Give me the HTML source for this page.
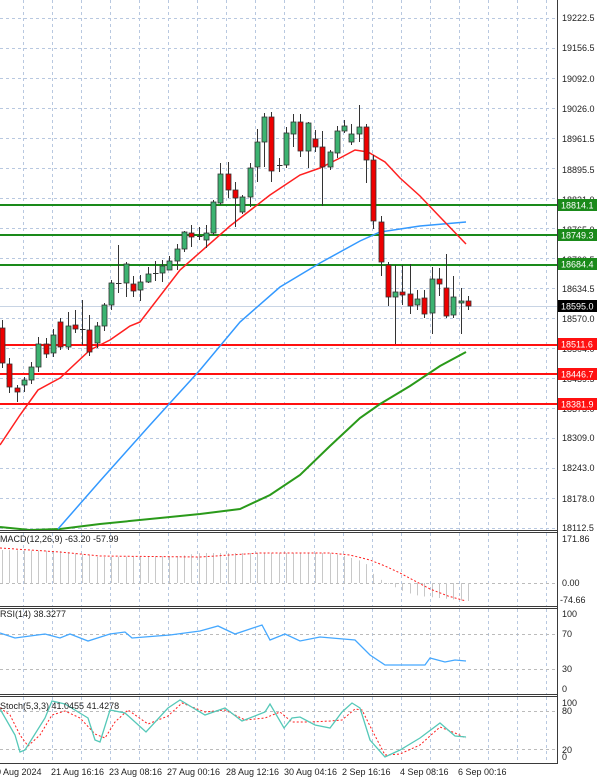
<!DOCTYPE html>
<html><head><meta charset="utf-8"><style>
html,body{margin:0;padding:0;background:#fff;width:600px;height:782px;overflow:hidden}
svg{display:block;font-family:"Liberation Sans",sans-serif}
</style></head><body>
<svg id="s" width="600" height="782" viewBox="0 0 600 782" xmlns="http://www.w3.org/2000/svg">
<g id="grid" stroke="#b8c8e0" stroke-width="1" stroke-dasharray="3,3"></g>
<g id="levels"></g>
<g id="mas" fill="none" stroke-width="1.5">
<polyline stroke="#2a9a1a" stroke-width="2" points="0,527 30,530 60,529 100,524 160,518 200,514 240,509 270,495 300,475 330,446 360,418 380,404 410,386 440,366 466,352"/>
<polyline stroke="#3399ff" points="58,529 100,481 150,425 200,370 240,322 280,287 320,263 360,241 380,232 420,226 466,222"/>
<polyline stroke="#ff2020" points="0,445 20,415 38,390 60,378 90,350 110,340 130,326 140,322 180,270 230,226 270,195 300,175 320,168 340,158 355,150 368,152 385,162 400,178 420,196 440,217 466,244"/>
</g>
<g id="candles"></g>
<g id="macd"></g>
<polyline fill="none" stroke="#ff2020" stroke-dasharray="2,2" points="0,548 60,552 100,556 200,557 260,553 330,553 350,555 370,560 385,566 400,573 415,581 430,589 448,596 466,601"/>
<polyline fill="none" stroke="#45a8ff" stroke-width="1.3" points="0,633 15,638 30,636 45,634 60,638 70,634 88,641 110,634 125,632 132,638 170,635 200,631 218,626 235,634 262,625 270,640 285,634 300,641 320,637 355,640 370,655 385,665 410,665 425,665 430,658 445,662 455,660 466,661"/>
<polyline fill="none" stroke="#ff2020" stroke-dasharray="2,2" points="0,708 10,715 20,735 28,746 40,735 52,715 65,711 80,718 95,734 105,738 115,722 128,710 148,724 168,716 182,703 205,712 225,710 245,720 265,718 280,712 292,722 310,722 330,721 342,720 355,709 362,710 372,730 385,755 400,754 420,745 440,727 455,733 466,738"/>
<polyline fill="none" stroke="#55c8b8" stroke-width="1.3" points="0,709 15,735 20,752 25,750 45,718 52,701 65,704 88,718 95,740 100,742 110,710 125,713 146,732 168,708 180,700 205,715 225,708 242,721 265,712 270,704 284,728 292,718 300,717 315,725 330,728 342,712 352,703 360,708 370,740 385,757 400,750 420,738 440,723 455,736 466,737"/>
<g stroke="#3a3a3a" stroke-width="1" fill="none">
<line x1="557.5" y1="0" x2="557.5" y2="764"/>
<line x1="0" y1="530.5" x2="557" y2="530.5"/><line x1="0" y1="532.5" x2="557" y2="532.5"/>
<line x1="0" y1="606.5" x2="557" y2="606.5"/><line x1="0" y1="608.5" x2="557" y2="608.5"/>
<line x1="0" y1="694.5" x2="557" y2="694.5"/><line x1="0" y1="696.5" x2="557" y2="696.5"/>
<line x1="0" y1="763.5" x2="557" y2="763.5"/>
</g>
<g font-size="9" fill="#222" id="axis">
<text x="562" y="21">19222.5</text><text x="562" y="51">19156.5</text><text x="562" y="82">19092.0</text>
<text x="562" y="112">19026.0</text><text x="562" y="142">18961.5</text><text x="562" y="173">18895.5</text>
<text x="562" y="203">18831.0</text><text x="562" y="233">18765.0</text><text x="562" y="263">18700.5</text>
<text x="562" y="292">18634.5</text><text x="562" y="322">18570.0</text><text x="562" y="352">18504.0</text>
<text x="562" y="382">18439.5</text><text x="562" y="412">18375.0</text><text x="562" y="441">18309.0</text>
<text x="562" y="471">18243.0</text><text x="562" y="502">18178.0</text><text x="562" y="531">18112.5</text>
<text x="562" y="542">171.86</text><text x="562" y="586">0.00</text><text x="560" y="603">-74.66</text>
<text x="562" y="617">100</text><text x="562" y="637">70</text><text x="562" y="672">30</text><text x="562" y="692">0</text>
<text x="562" y="706">100</text><text x="562" y="714">80</text><text x="562" y="753">20</text><text x="562" y="760">0</text>
<text x="-4" y="775">0 Aug 2024</text><text x="51" y="775">21 Aug 16:16</text><text x="109" y="775">23 Aug 08:16</text>
<text x="167" y="775">27 Aug 00:16</text><text x="226" y="775">28 Aug 12:16</text><text x="284" y="775">30 Aug 04:16</text>
<text x="342" y="775">2 Sep 16:16</text><text x="400" y="775">4 Sep 08:16</text><text x="458" y="775">6 Sep 00:16</text>
<text x="0" y="542">MACD(12,26,9) -63.20 -57.99</text>
<text x="0" y="617">RSI(14) 38.3277</text>
<text x="0" y="709">Stoch(5,3,3) 41.0455 41.4278</text>
</g>
<g id="tags" font-size="9"></g>
</svg>
<script>
var NS="http://www.w3.org/2000/svg";
function el(p,t,a){var e=document.createElementNS(NS,t);for(var k in a)e.setAttribute(k,a[k]);p.appendChild(e);return e;}
var g=document.getElementById('grid');
for(var x=23;x<557;x+=29.05){var xx=Math.round(x)+.5;el(g,'line',{x1:xx,y1:0,x2:xx,y2:530});el(g,'line',{x1:xx,y1:533,x2:xx,y2:606});el(g,'line',{x1:xx,y1:609,x2:xx,y2:694});el(g,'line',{x1:xx,y1:697,x2:xx,y2:763});}
for(var y=18;y<530;y+=30.0){var yy=Math.round(y)+.5;el(g,'line',{x1:0,y1:yy,x2:557,y2:yy});}
[634,669,711,749,583].forEach(function(y){el(g,'line',{x1:0,y1:y+.5,x2:557,y2:y+.5,stroke:'#bbb'});});
var L=document.getElementById('levels');
el(L,'line',{x1:0,y1:306.5,x2:557,y2:306.5,stroke:'#c8d4e4'});
[205,235,265].forEach(function(y){el(L,'line',{x1:0,y1:y,x2:557,y2:y,stroke:'#1a8a1a','stroke-width':2});});
[345,374,404].forEach(function(y){el(L,'line',{x1:0,y1:y,x2:557,y2:y,stroke:'#ff1010','stroke-width':2});});
var T=document.getElementById('tags');
function tag(y,txt,bg){el(T,'rect',{x:558,y:y-6,width:39,height:12,fill:bg});var t=el(T,'text',{x:561,y:y+3.5,fill:'#fff'});t.textContent=txt;}
tag(205,'18814.1','#1a8a1a');tag(235,'18749.3','#1a8a1a');tag(264,'18684.4','#1a8a1a');
tag(306,'18595.0','#000');tag(344,'18511.6','#ff1010');tag(374,'18446.7','#ff1010');tag(404,'18381.9','#ff1010');
// candles: [open,close,high,low] in y
var c=[[328,363,320,368],[364,387,358,393],[388,392,385,402],[385,380,377,392],[380,367,362,384],[367,344,337,372],[344,354,338,358],[353,335,329,357],[322,347,318,350],[347,326,312,350],[325,329,310,333],[329,330,300,345],[330,352,315,356],[343,326,322,348],[326,305,303,331],[305,283,280,310],[283,283,245,293],[283,264,262,297],[284,291,276,297],[290,282,275,301],[282,274,267,283],[273,273,261,281],[273,266,260,282],[270,261,256,270],[261,249,244,270],[249,232,231,252],[233,237,225,247],[236,236,227,240],[240,233,225,248],[233,202,200,235],[203,174,163,205],[174,190,162,198],[190,198,182,227],[212,197,195,214],[197,168,163,207],[167,142,129,182],[142,117,113,167],[117,171,112,182],[165,165,158,172],[165,133,127,168],[134,122,114,147],[122,151,114,157],[151,123,122,168],[139,147,130,152],[147,167,131,206],[167,152,150,170],[153,131,126,158],[131,126,120,133],[142,134,124,145],[134,127,105,142],[127,160,124,183],[160,221,155,229],[222,262,216,276],[265,297,262,306],[297,292,265,344],[292,295,265,305],[294,306,264,314],[305,299,290,310],[298,314,290,318],[313,279,267,334],[279,284,268,296],[288,316,254,318],[315,297,276,318],[303,301,288,334],[301,306,296,310]];
var C=document.getElementById('candles');
c.forEach(function(k,i){var x=2+7.28*i,xc=Math.round(x)+.5;el(C,'line',{x1:xc,y1:k[2],x2:xc,y2:k[3],stroke:'#333'});
var top=Math.min(k[0],k[1]),h=Math.max(Math.abs(k[0]-k[1]),1);var up=k[1]<k[0];
if(h<=1){el(C,'line',{x1:xc-2.5,y1:top+.5,x2:xc+3,y2:top+.5,stroke:'#333'});}
else el(C,'rect',{x:xc-2.5,y:top,width:5,height:h,fill:up?'#3cb371':'#ee0000',stroke:'#333','stroke-width':.8});});
var M=document.getElementById('macd');
function mt(x){var p=[[0,550],[60,551],[100,557],[180,556],[200,553],[330,553],[345,556],[365,562],[375,576],[385,582],[393,586],[405,592],[420,596],[440,598],[466,601]];for(var j=1;j<p.length;j++){if(x<=p[j][0]){var a=p[j-1],b=p[j];return a[1]+(b[1]-a[1])*(x-a[0])/(b[0]-a[0]);}}return 601;}
for(var i=0;i<65;i++){var x=Math.round(2+7.28*i)+.5,t=mt(x);el(M,'line',{x1:x,y1:583,x2:x,y2:t,stroke:'#c8c8c8'});}
</script>
</body></html>
